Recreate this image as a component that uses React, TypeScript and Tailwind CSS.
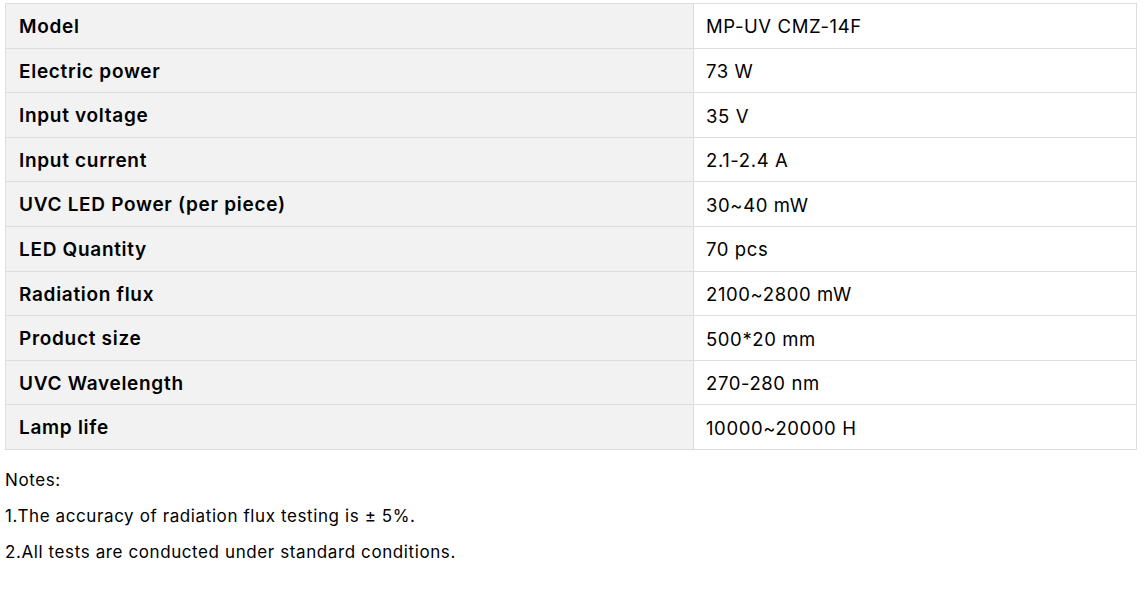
const specs: [string, string][] = [
  ["Model", "MP-UV CMZ-14F"],
  ["Electric power", "73 W"],
  ["Input voltage", "35 V"],
  ["Input current", "2.1-2.4 A"],
  ["UVC LED Power (per piece)", "30~40 mW"],
  ["LED Quantity", "70 pcs"],
  ["Radiation flux", "2100~2800 mW"],
  ["Product size", "500*20 mm"],
  ["UVC Wavelength", "270-280 nm"],
  ["Lamp life", "10000~20000 H"],
]

export default function App() {
  return (
    <div className="min-h-screen bg-white pl-[5px] pt-[3px] text-black [font-family:Inter,'Noto_Sans',sans-serif]">
      {/* Spec table */}
      <table className="w-[1132px] border-collapse">
        <tbody>
          {specs.map(([label, value]) => (
            <tr key={label} className="h-[44.6px]">
              <td className="w-[688px] border border-[#dddddd] bg-[#f2f2f2] px-[13px] pt-[3px] text-[19px] font-semibold tracking-[0.7px]">
                {label}
              </td>
              <td className="border border-[#dddddd] px-[12px] pt-[3px] text-[18.5px] tracking-[0.6px]">{value}</td>
            </tr>
          ))}
        </tbody>
      </table>

      {/* Notes */}
      <div className="mt-[20px] space-y-[16px] text-[17px] leading-[20px] tracking-[0.6px]">
        <p>Notes:</p>
        <p>1.The accuracy of radiation flux testing is ± 5%.</p>
        <p>2.All tests are conducted under standard conditions.</p>
      </div>
    </div>
  )
}
